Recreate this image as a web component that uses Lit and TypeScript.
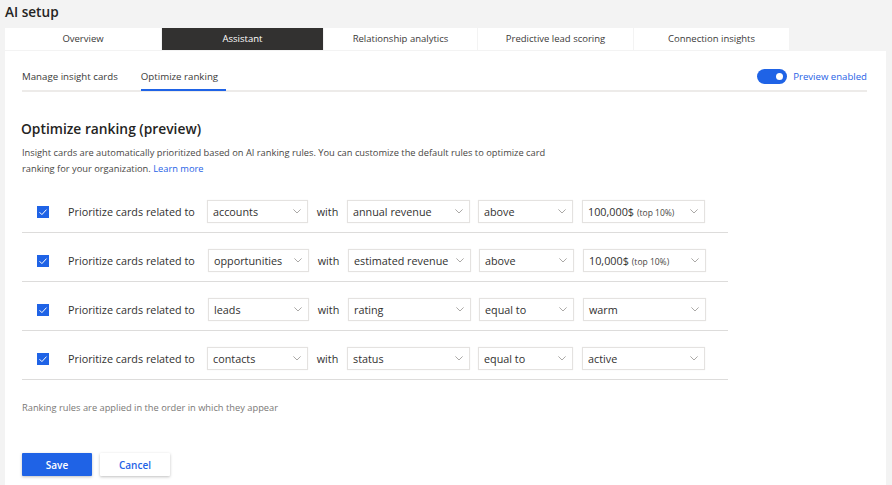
import { LitElement, html, css, svg } from 'lit';
import { customElement } from 'lit/decorators.js';

const chevron = svg`<path d="M.4 .4l3.6 3.6 3.6-3.6" fill="none" stroke="#a19f9d" stroke-width=".9"/>`;

const rules = [
  { what: 'accounts', field: 'annual revenue', op: 'above', value: '100,000$', note: '(top 10%)', nudge: false },
  { what: 'opportunities', field: 'estimated revenue', op: 'above', value: '10,000$', note: '(top 10%)', nudge: true },
  { what: 'leads', field: 'rating', op: 'equal to', value: 'warm', note: '', nudge: true },
  { what: 'contacts', field: 'status', op: 'equal to', value: 'active', note: '', nudge: false },
];

@customElement('app-root')
export class AppRoot extends LitElement {
  static styles = css`
    :host {
      display: block;
      height: 485px;
      overflow: hidden;
      background: #f3f3f3;
      font-family: 'Open Sans', 'Noto Sans', sans-serif;
      color: #323130;
      font-size: 10.8px;
    }
    h1 {
      margin: 0;
      padding: 3px 0 0 5px;
      height: 28px;
      box-sizing: border-box;
      font-size: 13.6px;
      line-height: 18px;
      font-weight: 600;
      color: #252423;
    }
    .tabs {
      display: grid;
      grid-template-columns: 156px 161px 153px 155px 155px;
      gap: 1px;
      margin-left: 5px;
      height: 22px;
      font-size: 9.5px;
    }
    .tabs div {
      background: #fff;
      text-align: center;
      line-height: 22px;
      color: #3b3a39;
    }
    .tabs .on {
      background: #323130;
      color: #fff;
    }
    .panel {
      margin: 1px 6px 0 5px;
      height: 434px;
      box-sizing: border-box;
      background: #fff;
      padding: 0 19px 0 17px;
    }
    .subbar {
      display: flex;
      align-items: center;
      height: 41px;
      border-bottom: 2px solid #edebe9;
      box-sizing: border-box;
      font-size: 9.7px;
    }
    .sub {
      height: 41px;
      box-sizing: border-box;
      padding-top: 18px;
      line-height: 17px;
      margin-right: 23px;
      color: #3b3a39;
    }
    .sub.on {
      border-bottom: 2px solid #1f63e6;
      padding-right: 8px;
    }
    .toggle {
      margin-left: auto;
      display: flex;
      align-items: center;
      gap: 6px;
      color: #1f63e6;
      padding-top: 11px;
      font-size: 9.6px;
    }
    .track {
      width: 30px;
      height: 15px;
      border-radius: 8px;
      background: #1f63e6;
      position: relative;
    }
    .track::after {
      content: '';
      position: absolute;
      right: 4px;
      top: 4px;
      width: 7px;
      height: 7px;
      border-radius: 50%;
      background: #fff;
    }
    h2 {
      margin: 27px 0 0 -1px;
      font-size: 13.8px;
      line-height: 19px;
      font-weight: 600;
      color: #252423;
    }
    .intro {
      margin: 7px 0 0;
      width: 540px;
      line-height: 16px;
      font-size: 9.3px;
      color: #484644;
    }
    .intro a {
      color: #1f63e6;
    }
    .rules {
      width: 706px;
      margin-top: 7px;
    }
    .rule {
      display: flex;
      align-items: center;
      height: 49px;
      box-sizing: border-box;
      padding: 7px 0 0 15px;
      border-bottom: 1px solid #dddcdb;
    }
    .check {
      width: 12px;
      height: 12px;
      background: #1f63e6;
      margin-right: 19px;
      display: flex;
    }
    .label {
      width: 139px;
      white-space: nowrap;
    }
    .nudge .label {
      width: 140px;
    }
    .select {
      display: flex;
      align-items: center;
      justify-content: space-between;
      height: 23px;
      box-sizing: border-box;
      padding: 0 6px 0 5px;
      border: 1px solid #e4e2e0;
      box-shadow: 0 0 1px rgba(0, 0, 0, 0.08);
      white-space: nowrap;
    }
    .select small {
      font-size: 8.5px;
      margin-left: 3px;
      color: #484644;
    }
    .what { width: 101px; }
    .field { width: 123px; }
    .op { width: 95px; margin-left: 8px; }
    .value { width: 123px; margin-left: 9px; }
    .with {
      width: 39px;
      text-align: center;
    }
    .foot {
      margin: 21px 0 0;
      font-size: 9.3px;
      line-height: 14px;
      color: #7a7876;
    }
    .buttons {
      display: flex;
      gap: 8px;
      margin-top: 38px;
    }
    button {
      width: 70px;
      height: 23px;
      padding: 0;
      border: 0;
      font: 600 10px 'Open Sans', 'Noto Sans', sans-serif;
      border-radius: 1px;
      box-shadow: 0 1px 3px rgba(0, 0, 0, 0.25);
    }
    .save {
      background: #1f63e6;
      color: #fff;
    }
    .cancel {
      background: #fff;
      color: #1f63e6;
    }
  `;

  private select(cls: string, text: string, note = '') {
    return html`<div class="select ${cls}">
      <span>${text}${note ? html`<small>${note}</small>` : ''}</span>
      <svg width="8" height="5" viewBox="0 0 8 5">${chevron}</svg>
    </div>`;
  }

  render() {
    return html`
      <h1>AI setup</h1>
      <div class="tabs">
        <div>Overview</div>
        <div class="on">Assistant</div>
        <div>Relationship analytics</div>
        <div>Predictive lead scoring</div>
        <div>Connection insights</div>
      </div>
      <div class="panel">
        <div class="subbar">
          <div class="sub">Manage insight cards</div>
          <div class="sub on">Optimize ranking</div>
          <div class="toggle"><span class="track"></span>Preview enabled</div>
        </div>
        <h2>Optimize ranking (preview)</h2>
        <p class="intro">
          Insight cards are automatically prioritized based on AI ranking rules. You can customize the default rules to
          optimize card<br />ranking for your organization. <a>Learn more</a>
        </p>
        <div class="rules">
          ${rules.map(
            (r) => html`<div class="rule ${r.nudge ? 'nudge' : ''}">
              <span class="check">
                <svg width="12" height="12" viewBox="0 0 12 12">
                  <path d="M2.5 6.2l2.4 2.4 4.6-5" fill="none" stroke="#fff" stroke-width="1"/>
                </svg>
              </span>
              <span class="label">Prioritize cards related to</span>
              ${this.select('what', r.what)}
              <span class="with">with</span>
              ${this.select('field', r.field)} ${this.select('op', r.op)} ${this.select('value', r.value, r.note)}
            </div>`,
          )}
        </div>
        <p class="foot">Ranking rules are applied in the order in which they appear</p>
        <div class="buttons">
          <button class="save">Save</button>
          <button class="cancel">Cancel</button>
        </div>
      </div>
    `;
  }
}
